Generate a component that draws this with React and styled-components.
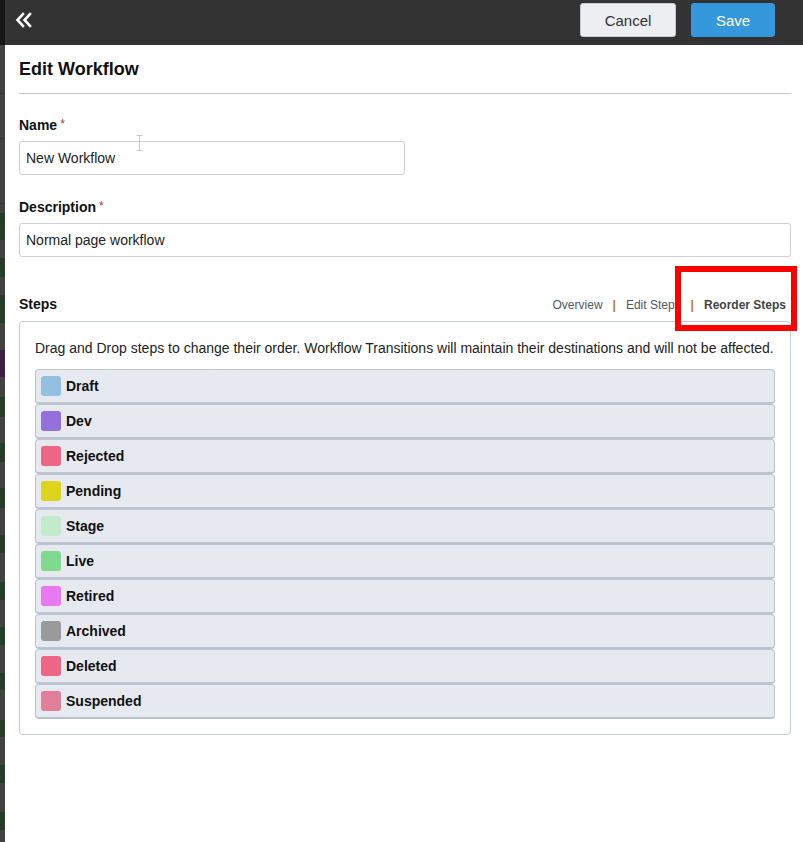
import styled, { createGlobalStyle } from 'styled-components';

const GlobalStyle = createGlobalStyle`
  html, body {
    margin: 0;
    padding: 0;
    background: #fff;
  }
  body {
    font-family: "Liberation Sans", Arial, sans-serif;
    color: #222;
  }
  * { box-sizing: border-box; }
`;

const Page = styled.div`
  display: flex;
  min-height: 100vh;
`;

const Backdrop = styled.div`
  width: 5px;
  flex-shrink: 0;
  display: flex;
  flex-direction: column;
  background: #424242;
`;

const BackdropBand = styled.div`
  flex-shrink: 0;
  border-top: ${p => (p.$line ? '1px solid #363636' : 'none')};
`;

const Panel = styled.div`
  flex: 1;
  display: flex;
  flex-direction: column;
  background: #fff;
`;

const TopBar = styled.div`
  height: 45px;
  background: #333;
  display: flex;
  align-items: flex-start;
  padding: 3px 28px 0 10px;
`;

const BackButton = styled.button`
  background: none;
  border: 0;
  padding: 0;
  margin-top: 9px;
  width: 17px;
  height: 16px;
  cursor: pointer;
  svg { display: block; }
`;

const Actions = styled.div`
  margin-left: auto;
  display: flex;
  gap: 15px;
`;

const Button = styled.button`
  height: 34px;
  width: ${p => p.$width}px;
  border-radius: 3px;
  font-family: inherit;
  font-size: 15px;
  cursor: pointer;
  border: 1px solid ${p => (p.$primary ? '#3598dc' : '#c7cbd1')};
  background: ${p => (p.$primary ? '#3598dc' : '#eceef1')};
  color: ${p => (p.$primary ? '#fff' : '#333')};
`;

const Content = styled.div`
  padding: 0 12px 40px 14px;
`;

const Title = styled.h1`
  margin: 0;
  padding: 13px 0 13px;
  font-size: 18px;
  line-height: 22px;
  font-weight: bold;
  color: #111;
  border-bottom: 1px solid #c3c7ce;
`;

const Field = styled.div`
  position: relative;
  margin-top: ${p => p.$top}px;
`;

const Label = styled.label`
  display: block;
  font-size: 14px;
  line-height: 16px;
  font-weight: bold;
  color: #111;
  margin-bottom: 8px;
`;

const Required = styled.span`
  color: #b8323b;
  font-size: 12px;
  font-weight: normal;
  margin-left: 3px;
  vertical-align: 2px;
`;

const Input = styled.input`
  display: block;
  width: ${p => p.$width || '100%'};
  height: 34px;
  padding: 0 6px;
  border: 1px solid #cdd0d5;
  border-radius: 3px;
  font-family: inherit;
  font-size: 14px;
  color: #222;
  background: #fff;
  outline: none;
`;

const Cursor = styled.svg`
  position: absolute;
  left: 117px;
  top: 19px;
`;

const StepsHeader = styled.div`
  margin-top: 39px;
  display: flex;
  align-items: baseline;
  padding-right: 5px;
  position: relative;
`;

const StepsTitle = styled.span`
  font-size: 14px;
  line-height: 16px;
  font-weight: bold;
  color: #111;
`;

const ViewLinks = styled.div`
  margin-left: auto;
  display: flex;
  align-items: baseline;
  gap: 10px;
  font-size: 12px;
`;

const ViewLink = styled.a`
  color: ${p => (p.$active ? '#444' : '#4f5966')};
  font-weight: ${p => (p.$active ? 'bold' : 'normal')};
  text-decoration: none;
  cursor: pointer;
`;

const Divider = styled.span`
  color: #b9771d;
  font-weight: bold;
`;

const Highlight = styled.div`
  position: absolute;
  right: -6px;
  top: -30px;
  width: 122px;
  height: 65px;
  border: 6px solid #f00;
  pointer-events: none;
`;

const StepsBox = styled.div`
  margin-top: 9px;
  border: 1px solid #c5cbd3;
  border-radius: 4px;
  padding: 18px 15px 15px;
`;

const Hint = styled.p`
  margin: 0 0 13px;
  font-size: 14px;
  line-height: 16px;
  white-space: nowrap;
  color: #222;
`;

const StepList = styled.div`
  display: flex;
  flex-direction: column;
`;

const Step = styled.div`
  height: 35px;
  display: flex;
  align-items: center;
  gap: 5px;
  padding: 0 5px;
  background: #e6e9f0;
  border: 1px solid #bcc4cf;
  border-bottom-width: 2px;
  border-radius: 4px;
  cursor: move;
`;

const Swatch = styled.span`
  width: 20px;
  height: 20px;
  border-radius: 3px;
  background: ${p => p.$color};
`;

const StepName = styled.span`
  font-size: 14px;
  font-weight: bold;
  color: #111;
`;

const G = '#263d29';
const P = '#3d1f45';
const backdrop = [
  [45, '#161616'], [48, null], [45, null, true], [65, null, true], [10, null, true],
  [27, G], [18, null], [19, G], [18, null], [28, G], [27, null], [27, P], [20, null],
  [20, G], [26, null], [19, G], [26, null], [20, G], [27, null], [18, G], [29, null],
  [18, G], [27, null], [18, G], [28, null], [17, G], [30, null], [17, G], [28, null],
  [18, G], [29, null], [18, G], [12, null],
];

const steps = [
  { name: 'Draft', color: '#94bfdf' },
  { name: 'Dev', color: '#9370db' },
  { name: 'Rejected', color: '#ee6685' },
  { name: 'Pending', color: '#dcd51c' },
  { name: 'Stage', color: '#c1ebca' },
  { name: 'Live', color: '#7fd98e' },
  { name: 'Retired', color: '#e879f0' },
  { name: 'Archived', color: '#9a9a9a' },
  { name: 'Deleted', color: '#ee6685' },
  { name: 'Suspended', color: '#e17e98' },
];

const App = () => {
  return (
    <>
      <GlobalStyle />
      <Page>
        <Backdrop>
          {backdrop.map(([h, c, line], i) => (
            <BackdropBand key={i} $line={line} style={{ height: h, background: c || undefined }} />
          ))}
        </Backdrop>
        <Panel>
          <TopBar>
            <BackButton aria-label="Back">
              <svg width="17" height="16" viewBox="0 0 17 16" fill="none" stroke="#fff" strokeWidth="2.6" strokeLinecap="square">
                <polyline points="8,2 2.5,8 8,14" />
                <polyline points="15,2 9.5,8 15,14" />
              </svg>
            </BackButton>
            <Actions>
              <Button $width={96}>Cancel</Button>
              <Button $width={84} $primary>Save</Button>
            </Actions>
          </TopBar>
          <Content>
            <Title>Edit Workflow</Title>
            <Field $top={22}>
              <Label>Name<Required>*</Required></Label>
              <Input $width="386px" defaultValue="New Workflow" />
              <Cursor width="7" height="16" viewBox="0 0 7 16" fill="none" stroke="#c9c9c9" strokeWidth="1">
                <path d="M0.5 0.5h6M3.5 0.5v15M0.5 15.5h6" />
              </Cursor>
            </Field>
            <Field $top={23}>
              <Label>Description<Required>*</Required></Label>
              <Input defaultValue="Normal page workflow" />
            </Field>
            <StepsHeader>
              <StepsTitle>Steps</StepsTitle>
              <ViewLinks>
                <ViewLink>Overview</ViewLink>
                <Divider>|</Divider>
                <ViewLink>Edit Steps</ViewLink>
                <Divider>|</Divider>
                <ViewLink $active>Reorder Steps</ViewLink>
              </ViewLinks>
              <Highlight />
            </StepsHeader>
            <StepsBox>
              <Hint>Drag and Drop steps to change their order. Workflow Transitions will maintain their destinations and will not be affected.</Hint>
              <StepList>
                {steps.map(s => (
                  <Step key={s.name}>
                    <Swatch $color={s.color} />
                    <StepName>{s.name}</StepName>
                  </Step>
                ))}
              </StepList>
            </StepsBox>
          </Content>
        </Panel>
      </Page>
    </>
  );
};

export default App;
